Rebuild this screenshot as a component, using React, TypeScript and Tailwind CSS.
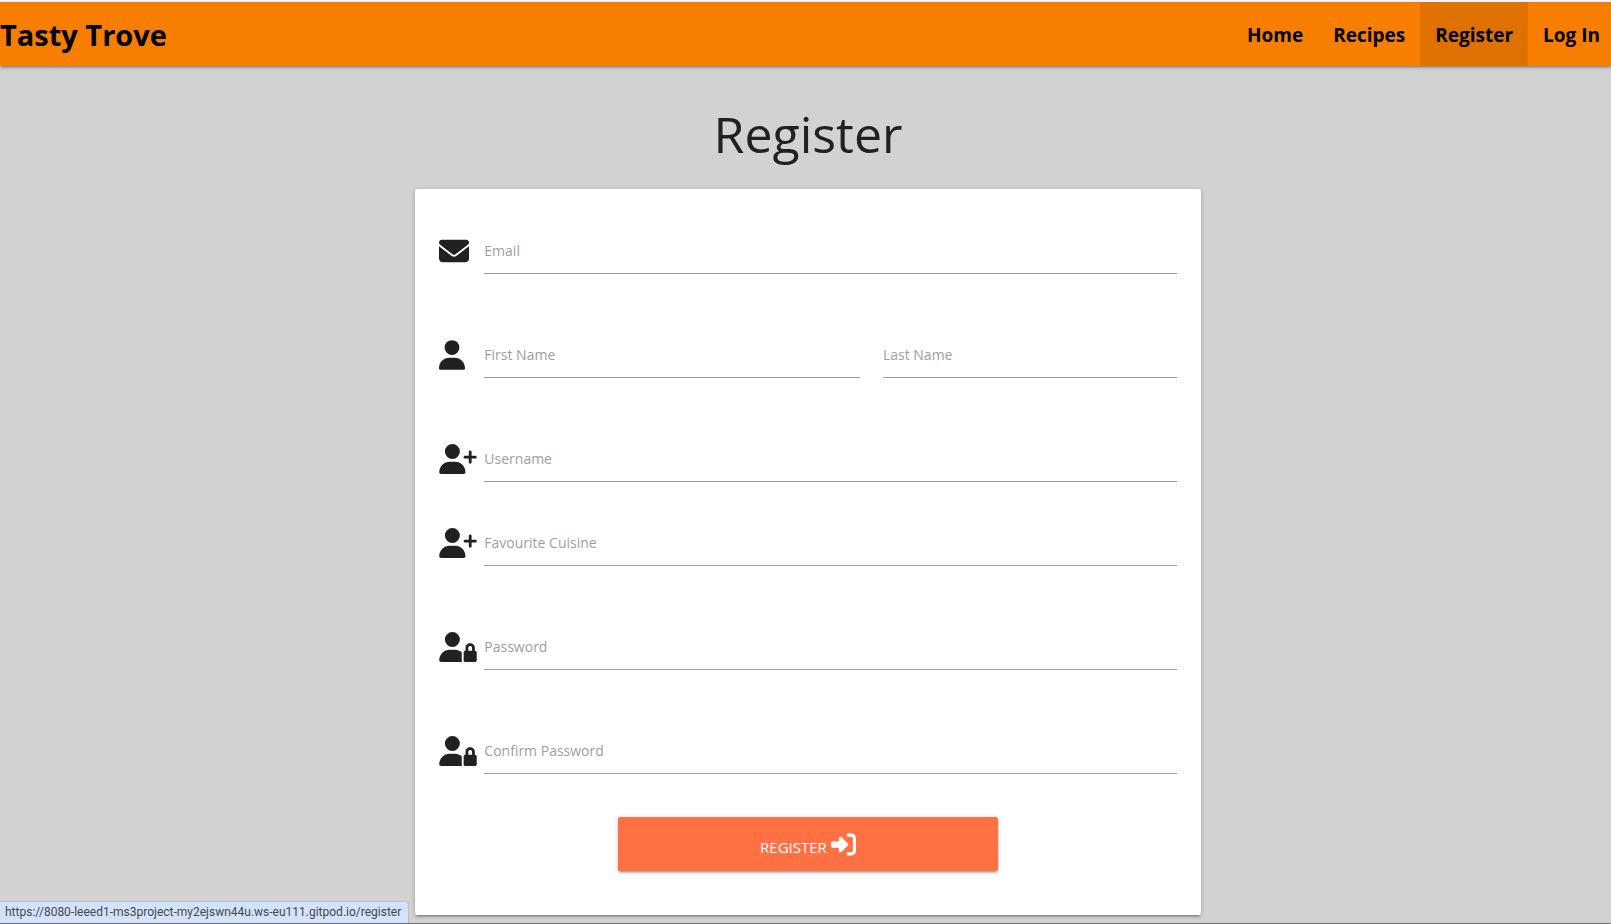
import type { ReactNode } from "react";
import { FaEnvelope, FaRightToBracket, FaUser, FaUserLock, FaUserPlus } from "react-icons/fa6";

const links = [
  { label: "Home", href: "/home" },
  { label: "Recipes", href: "/recipes" },
  { label: "Register", href: "/register" },
  { label: "Log In", href: "/login" },
];

function Field({ id, label, type = "text" }: { id: string; label: string; type?: string }) {
  return (
    <div className="grid w-full">
      <input
        id={id}
        name={id}
        type={type}
        placeholder=" "
        className="peer col-start-1 row-start-1 h-[46px] w-full border-b border-[#9e9e9e] bg-transparent text-[14px] text-[#212121] outline-none focus:border-[#26a69a]"
      />
      <label
        htmlFor={id}
        className="pointer-events-none invisible col-start-1 row-start-1 self-center text-[14px] leading-5 text-[#9e9e9e] peer-placeholder-shown:visible"
      >
        {label}
      </label>
    </div>
  );
}

function Row({ icon, children }: { icon: ReactNode; children: ReactNode }) {
  return (
    <div className="flex">
      <div className="w-[45px] shrink-0 pt-2 text-[#212121]">{icon}</div>
      {children}
    </div>
  );
}

export default function App() {
  return (
    <div className="flex min-h-screen flex-col border-b border-[#6f6f73] bg-[#d2d2d2] font-['Open_Sans','Noto_Sans',sans-serif] text-[#212121]">
      <header className="border-t-2 border-[#f4f4f6] shadow-[0_2px_2px_0_rgba(0,0,0,0.14),0_3px_1px_-2px_rgba(0,0,0,0.12),0_1px_5px_0_rgba(0,0,0,0.2)]">
        <nav className="flex h-16 items-stretch justify-between bg-[#f77e00] font-bold text-black">
          <a href="/" className="flex items-center pt-0.5 text-[29px]">
            Tasty Trove
          </a>
          <ul className="flex pl-4">
            {links.map(({ label, href }) => (
              <li key={label} className="group flex">
                <a
                  href={href}
                  className={
                    label === "Register"
                      ? "flex items-center bg-[#de7100] px-[15px] pt-0.5 text-[19px]"
                      : "flex items-center px-[15px] pt-0.5 text-[19px] group-last:pr-[11px]"
                  }
                >
                  {label}
                </a>
              </li>
            ))}
          </ul>
        </nav>
      </header>

      <main className="flex flex-col items-center pb-2 pl-[5px]">
        <h1 className="pt-[33px] pb-[19px] text-[50px] leading-[71px] font-normal">Register</h1>
        <form
          onSubmit={(event) => event.preventDefault()}
          className="flex w-[48.9%] flex-col rounded-xs bg-white px-6 pt-[39px] pb-11 shadow-[0_2px_2px_0_rgba(0,0,0,0.14),0_3px_1px_-2px_rgba(0,0,0,0.12),0_1px_5px_0_rgba(0,0,0,0.2)]"
        >
          <div className="flex flex-col gap-[58px]">
            <Row icon={<FaEnvelope className="h-[30px] w-[30px]" />}>
              <Field id="email" label="Email" type="email" />
            </Row>
            <Row icon={<FaUser className="h-[30px] w-[26px]" />}>
              <div className="grid w-full grid-cols-[376fr_294fr] gap-[23px]">
                <Field id="first_name" label="First Name" />
                <Field id="last_name" label="Last Name" />
              </div>
            </Row>
            <div className="flex flex-col gap-[38px]">
              <Row icon={<FaUserPlus className="h-[30px] w-[38px]" />}>
                <Field id="username" label="Username" />
              </Row>
              <Row icon={<FaUserPlus className="h-[30px] w-[38px]" />}>
                <Field id="cuisine" label="Favourite Cuisine" />
              </Row>
            </div>
            <Row icon={<FaUserLock className="h-[30px] w-[38px]" />}>
              <Field id="password" label="Password" type="password" />
            </Row>
            <Row icon={<FaUserLock className="h-[30px] w-[38px]" />}>
              <Field id="confirm_password" label="Confirm Password" type="password" />
            </Row>
          </div>
          <button
            type="submit"
            className="mt-[43px] flex h-[54px] w-[380px] max-w-full items-center justify-center gap-1 self-center rounded-xs bg-[#ff7043] text-[15px] text-white shadow-[0_2px_2px_0_rgba(0,0,0,0.14),0_3px_1px_-2px_rgba(0,0,0,0.12),0_1px_5px_0_rgba(0,0,0,0.2)]"
          >
            <span className="pt-1.5">REGISTER</span>
            <FaRightToBracket className="h-[25px] w-[25px]" />
          </button>
        </form>
      </main>

      <div className="fixed bottom-px left-0 rounded-tr border-t border-r border-[#b9bcc4] bg-[#d3e3fd] pr-[7px] pl-[5px] font-['Roboto',sans-serif] text-[12px] leading-[21px] text-[#474747]">
        https://8080-leeed1-ms3project-my2ejswn44u.ws-eu111.gitpod.io/register
      </div>
    </div>
  );
}
